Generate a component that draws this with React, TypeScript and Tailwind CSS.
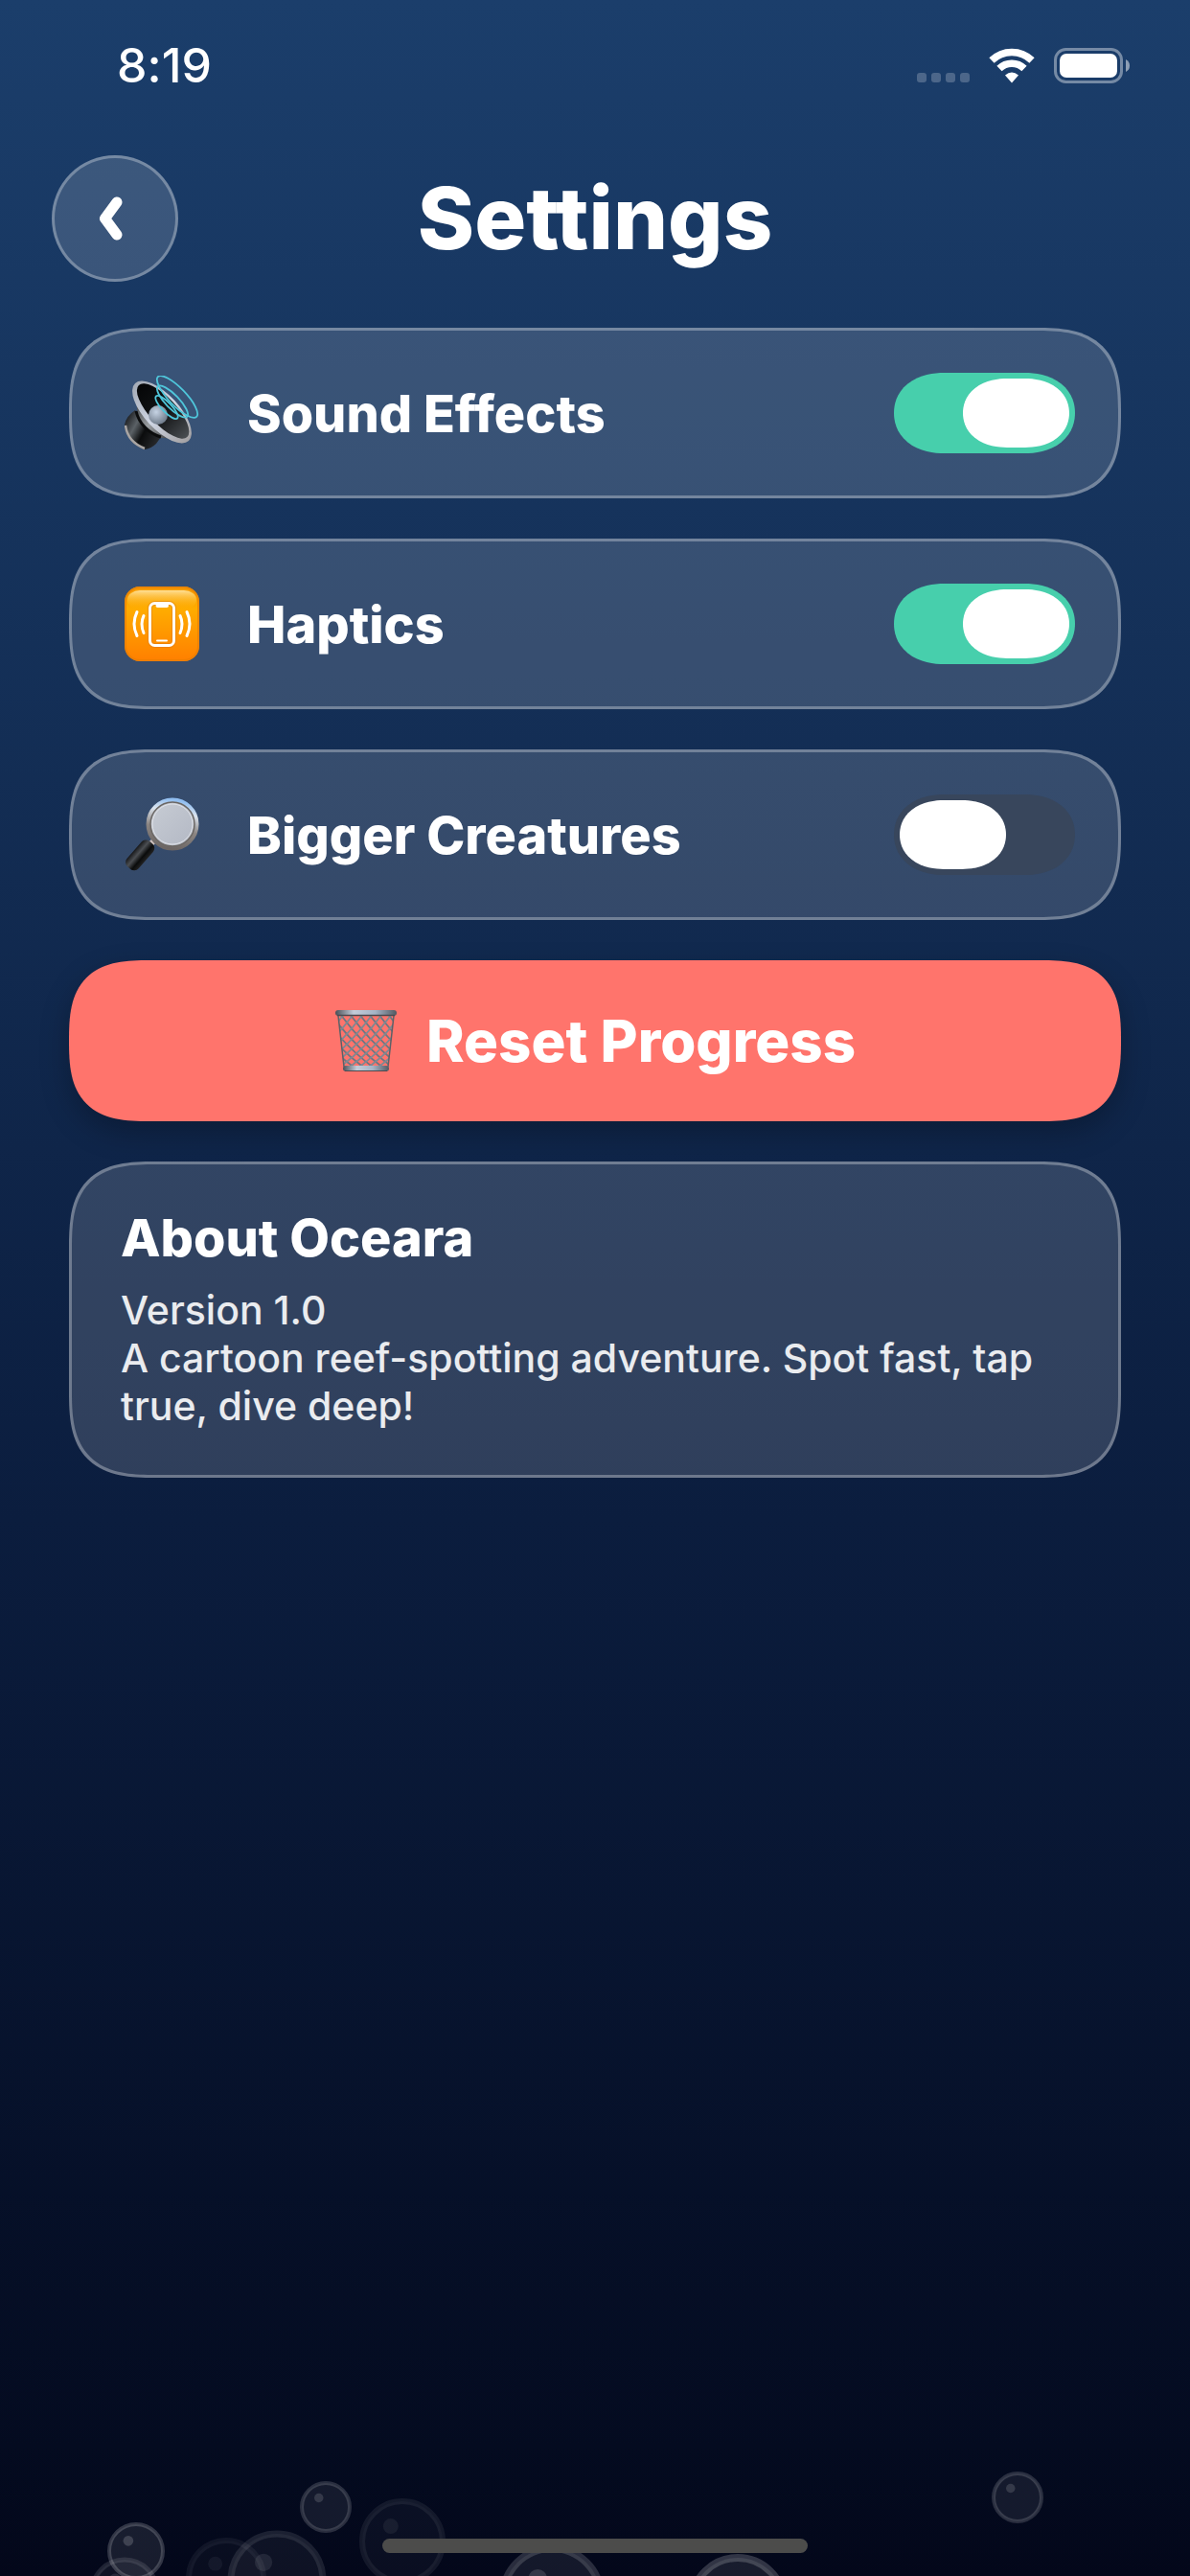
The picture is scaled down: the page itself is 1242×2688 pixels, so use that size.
import { useState } from "react";

const font =
  "font-[Inter,'Liberation_Sans',sans-serif] [font-feature-settings:'liga'_0,'calt'_0,'dlig'_0]";

const panel =
  "border-[3px] border-white/30 bg-white/15 rounded-[70px] supports-[corner-shape:squircle]:rounded-[90px] [corner-shape:superellipse(1.5)]";

function SpeakerIcon() {
  return (
    <svg viewBox="0 0 78 78" className="size-[78px] shrink-0" aria-hidden="true">
      <defs>
        <linearGradient id="magnet" x1="0" y1="0.2" x2="1" y2="0.8">
          <stop offset="0" stopColor="#15171a" />
          <stop offset="0.3" stopColor="#5b6166" />
          <stop offset="0.55" stopColor="#0b0c0d" />
          <stop offset="1" stopColor="#2b2d30" />
        </linearGradient>
        <linearGradient id="rim" x1="0" y1="0" x2="1" y2="0">
          <stop offset="0" stopColor="#a4abb6" />
          <stop offset="0.5" stopColor="#cfd6e4" />
          <stop offset="1" stopColor="#a3a1a3" />
        </linearGradient>
        <linearGradient id="basket" x1="0" y1="0" x2="1" y2="1">
          <stop offset="0" stopColor="#2b2e31" />
          <stop offset="0.5" stopColor="#9a9ea2" />
          <stop offset="1" stopColor="#2c2d2f" />
        </linearGradient>
        <linearGradient id="cone" x1="0" y1="0" x2="1" y2="0">
          <stop offset="0" stopColor="#050607" />
          <stop offset="0.55" stopColor="#131517" />
          <stop offset="1" stopColor="#4a4e52" />
        </linearGradient>
        <radialGradient id="dome" cx="0.4" cy="0.35" r="0.7">
          <stop offset="0" stopColor="#c6d3e4" />
          <stop offset="1" stopColor="#6a7685" />
        </radialGradient>
      </defs>
      <path d="M11 36 Q2 42 0 51 Q1 69 21 77 Q28 76 33 71 L38 64 Z" fill="url(#magnet)" />
      <path d="M1 52 Q3 69 21 76" stroke="#a9a5a3" strokeWidth="2.5" fill="none" />
      <path d="M13 30 C12 46 22 62 40 65 L54 66 L14 18 Z" fill="url(#basket)" />
      <path d="M12 37 C15 50 25 60 38 64" stroke="#0b0c0d" strokeWidth="3" fill="none" />
      <g transform="rotate(47 39 38)">
        <ellipse cx="39" cy="38" rx="41" ry="18" fill="url(#rim)" />
        <ellipse cx="39" cy="36.500" rx="37" ry="14" fill="url(#cone)" />
      </g>
      <circle cx="35" cy="41" r="10" fill="url(#dome)" />
      <g fill="none" stroke="#4fc6da" strokeWidth="1.800">
        <ellipse cx="44" cy="33" rx="16" ry="5" transform="rotate(46 44 33)" />
        <ellipse cx="50" cy="27" rx="22" ry="7" transform="rotate(46 50 27)" />
        <ellipse cx="55" cy="22" rx="29" ry="9" transform="rotate(46 55 22)" />
      </g>
    </svg>
  );
}

function HapticsIcon() {
  return (
    <svg viewBox="0 0 78 78" className="size-[78px] shrink-0" aria-hidden="true">
      <defs>
        <linearGradient id="tile" x1="0" y1="0" x2="0" y2="1">
          <stop offset="0" stopColor="#f79a00" />
          <stop offset="0.3" stopColor="#ffac00" />
          <stop offset="1" stopColor="#ff7f00" />
        </linearGradient>
        <linearGradient id="gloss" x1="0" y1="0" x2="0" y2="1">
          <stop offset="0" stopColor="#ffdf95" />
          <stop offset="1" stopColor="#ffb000" stopOpacity="0" />
        </linearGradient>
      </defs>
      <rect width="78" height="78" rx="16" fill="url(#tile)" />
      <rect x="1" y="1" width="76" height="76" rx="15" fill="none" stroke="#e87e00" strokeWidth="2" opacity="0.7" />
      <rect x="3" y="4" width="72" height="20" rx="13" fill="url(#gloss)" />
      <rect x="26.500" y="17.500" width="25" height="44" rx="5" fill="none" stroke="#d97400" strokeOpacity="0.45" strokeWidth="5" />
      <g fill="none" stroke="#fff" strokeLinecap="round" strokeWidth="3">
        <rect x="26.500" y="17.500" width="25" height="44" rx="5" />
        <path d="M34.500 20 H44" strokeWidth="4" />
        <path d="M34 56.500 H44" strokeWidth="2" />
        <path d="M13 26.500 Q7 39 13 51.500 M20 30.500 Q16 39 20 48.500 M65 26.500 Q71 39 65 51.500 M58 30.500 Q62 39 58 48.500" />
      </g>
    </svg>
  );
}

function MagnifierIcon() {
  return (
    <svg viewBox="0 0 78 78" className="size-[78px] shrink-0" aria-hidden="true">
      <defs>
        <linearGradient id="ring" x1="0.6" y1="0" x2="0.4" y2="1">
          <stop offset="0" stopColor="#8fbdf0" />
          <stop offset="0.25" stopColor="#dce4ee" />
          <stop offset="0.6" stopColor="#8b8582" />
          <stop offset="1" stopColor="#6c6664" />
        </linearGradient>
        <linearGradient id="lens" x1="0" y1="0" x2="1" y2="1">
          <stop offset="0" stopColor="#c7ccd4" />
          <stop offset="1" stopColor="#b3b8c4" />
        </linearGradient>
        <linearGradient id="grip" x1="0" y1="0" x2="1" y2="0">
          <stop offset="0" stopColor="#17181a" />
          <stop offset="0.35" stopColor="#4b4e52" />
          <stop offset="0.7" stopColor="#0a0b0b" />
          <stop offset="1" stopColor="#222" />
        </linearGradient>
      </defs>
      <path d="M25 51 L33 43" stroke="#cfc3c0" strokeWidth="6" />
      <rect x="8.500" y="43" width="16" height="35" rx="6" fill="url(#grip)" transform="rotate(41 16.500 60)" />
      <circle cx="50" cy="28" r="25" fill="none" stroke="url(#ring)" strokeWidth="5" />
      <circle cx="50" cy="28" r="23" fill="url(#lens)" stroke="#6b6764" strokeWidth="1.500" />
      <circle cx="50" cy="28" r="21" fill="none" stroke="#dfe2e8" strokeWidth="1" />
    </svg>
  );
}

const wires = [-46, -36, -26, -16, -6, 4, 14, 24, 34, 44, 54];

function TrashIcon() {
  return (
    <svg viewBox="0 0 66 66" className="size-[66px] shrink-0" aria-hidden="true">
      <defs>
        <linearGradient id="metal" x1="0" y1="0" x2="1" y2="0">
          <stop offset="0" stopColor="#4a5058" />
          <stop offset="0.3" stopColor="#c3cdd9" />
          <stop offset="0.65" stopColor="#a5b4c6" />
          <stop offset="1" stopColor="#535961" />
        </linearGradient>
        <clipPath id="basketClip">
          <path d="M4 6 H62 L56 62 H10 Z" />
        </clipPath>
      </defs>
      <g clipPath="url(#basketClip)" fill="none" strokeWidth="1.800">
        {wires.map((x) => (
          <path key={x} stroke="#6f7780" d={`M${66 - x} 62 Q${34 - x} 38 ${10 - x} 5`} />
        ))}
        {wires.map((x) => (
          <path key={x} stroke="#7f8892" d={`M${x} 62 Q${x + 32} 38 ${x + 56} 5`} />
        ))}
      </g>
      <path d="M4 7 L10 60 M62 7 L56 60" stroke="#5d6167" strokeWidth="1.500" />
      <rect x="1" y="1" width="64" height="6" rx="3" fill="url(#metal)" />
      <path d="M3 6.500 H63" stroke="#4b4a4f" strokeWidth="1.500" />
      <rect x="9" y="59" width="48" height="6" rx="3" fill="url(#metal)" />
      <path d="M11 64.500 H55" stroke="#4b4a4f" strokeWidth="1.200" />
    </svg>
  );
}

function StatusBar() {
  return (
    <div className="flex h-[136px] items-center justify-between pr-[62px] pl-[122px]">
      <span className="text-[50px] font-medium">8:19</span>
      <div className="flex items-center gap-5">
        <svg viewBox="0 0 55 37" className="h-[37px] w-[55px]" aria-hidden="true">
          <g fill="#fff" fillOpacity="0.22">
            <rect x="0" y="26" width="10" height="10" rx="3" />
            <rect x="15" y="26" width="10" height="10" rx="3" />
            <rect x="30" y="26" width="10" height="10" rx="3" />
            <rect x="45" y="26" width="10" height="10" rx="3" />
          </g>
        </svg>
        <svg viewBox="0 0 48 37" className="h-[37px] w-12" aria-label="Wi-Fi" role="img">
          <g fill="none" stroke="#fff" strokeWidth="7.500">
            <path d="M3 13 A30 30 0 0 1 45 13" />
            <path d="M11 21.500 A18.500 18.500 0 0 1 37 21.500" />
          </g>
          <path d="M17 28.500 Q24 22.500 31 28.500 L24 36.500 Z" fill="#fff" />
        </svg>
        <svg viewBox="0 0 80 37" className="h-[37px] w-20" aria-label="Battery full" role="img">
          <rect x="1.500" y="1.500" width="69" height="34" rx="11" fill="none" stroke="#fff" strokeOpacity="0.4" strokeWidth="3" />
          <rect x="6" y="6" width="60" height="25" rx="7" fill="#fff" />
          <path d="M75 12 Q79 14 79 18.500 Q79 23 75 25 Z" fill="#fff" fillOpacity="0.5" />
        </svg>
      </div>
    </div>
  );
}

type SettingRowProps = {
  id: string;
  label: string;
  icon: React.ReactNode;
  initial: boolean;
};

function SettingRow({ id, label, icon, initial }: SettingRowProps) {
  const [on, setOn] = useState(initial);
  return (
    <div className={`flex h-[178px] items-center gap-[50px] pr-[45px] pl-[55px] ${panel}`}>
      {icon}
      <label htmlFor={id} className="grow text-[54px] font-extrabold">
        {label}
      </label>
      <input
        id={id}
        type="checkbox"
        role="switch"
        checked={on}
        onChange={(e) => setOn(e.target.checked)}
        className="flex h-[84px] w-[189px] shrink-0 cursor-pointer appearance-none items-center rounded-[52px/42px] bg-[#38465c] px-[6px] [corner-shape:superellipse(1.1)] before:h-[72px] before:w-[111px] before:rounded-[46px/36px] before:bg-white before:[corner-shape:superellipse(1.1)] checked:justify-end checked:bg-[#47cfac]"
      />
    </div>
  );
}

const bubbles = [
  { x: 142, y: 74, r: 28, w: 4, o: 0.85 },
  { x: 130, y: 117, r: 34, w: 5, o: 0.5 },
  { x: 236, y: 102, r: 39, w: 6, o: 0.25 },
  { x: 289, y: 104, r: 48, w: 7, o: 0.45 },
  { x: 340, y: 28, r: 25, w: 4, o: 0.7 },
  { x: 420, y: 64, r: 42, w: 6, o: 0.3 },
  { x: 576, y: 122, r: 51, w: 8, o: 0.7 },
  { x: 770, y: 129, r: 48, w: 8, o: 0.85 },
  { x: 1062, y: 18, r: 25, w: 4, o: 0.7 },
];

function Bubbles() {
  return (
    <svg viewBox="0 -20 1242 120" className="pointer-events-none absolute inset-x-0 bottom-0 w-full" aria-hidden="true">
      {bubbles.map((b) => (
        <g key={`${b.x}-${b.y}`} opacity={b.o} fill="#fff">
          <circle cx={b.x} cy={b.y} r={b.r} fillOpacity="0.1" />
          <circle cx={b.x} cy={b.y} r={b.r} fill="none" stroke="#fff" strokeOpacity="0.22" strokeWidth={b.w} />
          <circle cx={b.x - b.r * 0.29} cy={b.y - b.r * 0.38} r={b.r * 0.19} fillOpacity="0.2" />
        </g>
      ))}
    </svg>
  );
}

export default function App() {
  return (
    <div
      className={`relative flex min-h-screen flex-col overflow-hidden bg-[linear-gradient(180deg,#1b3e6b_0%,#0b1d3e_59%,#040b20_95%,#03071a_100%)] text-white ${font}`}
    >
      <Bubbles />
      <StatusBar />

      <header className="mt-[26px] grid grid-cols-[132px_1fr_132px] items-center px-[54px]">
        <button
          type="button"
          aria-label="Back"
          className="flex size-[132px] items-center justify-center rounded-full border-[3px] border-white/30 bg-white/15"
        >
          <svg viewBox="0 0 30 48" className="mr-2.5 h-12 w-[30px]" aria-hidden="true">
            <path d="M22 7 L9.500 24 L22 41" fill="none" stroke="#fff" strokeWidth="11" strokeLinecap="round" strokeLinejoin="round" />
          </svg>
        </button>
        <h1 className="text-center text-[90px] leading-none font-extrabold">Settings</h1>
      </header>

      <main className="mt-12 flex flex-col gap-[42px] px-[72px]">
        <SettingRow id="sound" label="Sound Effects" icon={<SpeakerIcon />} initial={true} />
        <SettingRow id="haptics" label="Haptics" icon={<HapticsIcon />} initial={true} />
        <SettingRow id="bigger" label="Bigger Creatures" icon={<MagnifierIcon />} initial={false} />

        <button
          type="button"
          className="flex h-[168px] items-center justify-center gap-[30px] rounded-[70px] bg-[#ff746c] text-[60px] font-extrabold shadow-[0_12px_30px_rgba(0,0,0,0.25)] [corner-shape:superellipse(1.5)] supports-[corner-shape:squircle]:rounded-[84px]"
        >
          <TrashIcon />
          Reset Progress
        </button>

        <section className={`px-[51px] pt-11 pb-[47px] ${panel}`}>
          <h2 className="text-[54px] leading-[66px] font-extrabold">About Oceara</h2>
          <p className="mt-[17px] text-[41px] leading-[50px] font-medium text-white/90">
            Version 1.0
            <br />A cartoon reef-spotting adventure. Spot fast, tap true, dive deep!
          </p>
        </section>
      </main>

      <div className="relative mx-auto mt-auto mb-6 h-[15px] w-[444px] rounded-full bg-[#4c4c4b]" />
    </div>
  );
}
